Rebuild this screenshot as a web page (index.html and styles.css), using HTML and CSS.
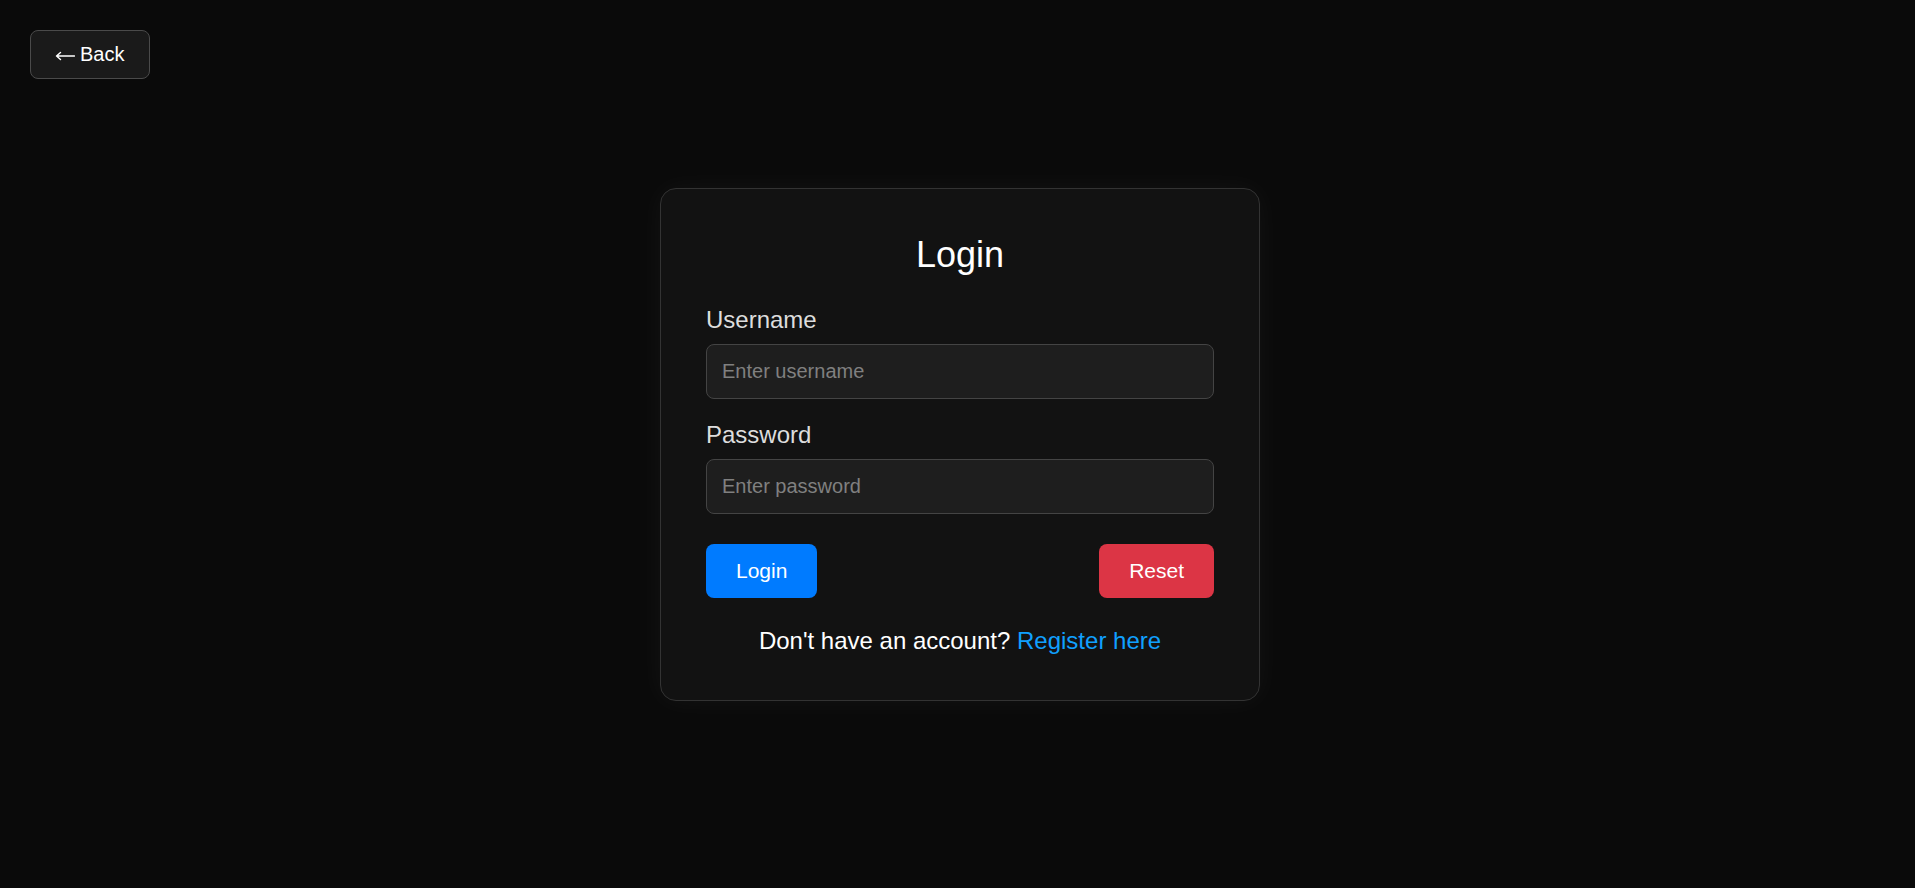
FILE: index.html
```html
<!DOCTYPE html>
<html lang="en">
<head>
<meta charset="utf-8">
<title>Login</title>
<link rel="stylesheet" href="styles.css">
</head>
<body>
<button class="back-btn" type="button"><svg class="back-arrow" width="20" height="10" viewBox="0 0 20 10" aria-hidden="true"><path d="M1.5 5H19.5M1.5 5L5.5 1.5M1.5 5L5.5 8.5" fill="none" stroke="#ffffff" stroke-width="1.4" stroke-linecap="round" stroke-linejoin="round"/></svg><span>Back</span></button>
<main class="page">
  <div class="card">
    <h2 class="title">Login</h2>
    <div class="form-group">
      <label class="label" for="username">Username</label>
      <input class="input" id="username" type="text" placeholder="Enter username">
    </div>
    <div class="form-group">
      <label class="label" for="password">Password</label>
      <input class="input" id="password" type="password" placeholder="Enter password">
    </div>
    <div class="actions">
      <button class="btn btn-primary" type="button">Login</button>
      <button class="btn btn-danger" type="button">Reset</button>
    </div>
    <p class="footer-text">Don't have an account? <a class="link" href="#">Register here</a></p>
  </div>
</main>
</body>
</html>
```

FILE: styles.css
```css
* {
  box-sizing: border-box;
}

html, body {
  margin: 0;
  padding: 0;
}

body {
  background: #0a0a0a;
  color: #ffffff;
  font-family: "Liberation Sans", Arial, sans-serif;
  min-height: 100vh;
}

.back-btn {
  position: absolute;
  top: 30px;
  left: 30px;
  display: inline-flex;
  align-items: center;
  gap: 5px;
  background: #1a1a1a;
  color: #ffffff;
  border: 1px solid #4a4a4a;
  border-radius: 8px;
  padding: 12px 25px 12px 24px;
  font-family: "Liberation Sans", Arial, sans-serif;
  font-size: 20px;
  line-height: 23px;
  cursor: pointer;
}

.back-arrow {
  display: block;
  margin-top: 3px;
}

.page {
  min-height: 100vh;
  display: flex;
  align-items: center;
  justify-content: center;
  padding-left: 5px;
}

.card {
  width: 600px;
  background: #121212;
  border: 1px solid #333333;
  border-radius: 16px;
  padding: 45px;
  box-shadow: 0 0 28px rgba(255, 255, 255, 0.045);
}

.title {
  margin: 0 0 30px;
  font-size: 36px;
  font-weight: 400;
  text-align: center;
  color: #ffffff;
}

.form-group {
  display: flex;
  flex-direction: column;
  gap: 10px;
  margin-bottom: 22px;
}

.label {
  font-size: 24px;
  color: #dddddd;
}

.input {
  width: 100%;
  background: #1e1e1e;
  border: 1px solid #444444;
  border-radius: 8px;
  padding: 15px;
  font-family: "Liberation Sans", Arial, sans-serif;
  font-size: 20px;
  line-height: 23px;
  color: #ffffff;
  outline: none;
}

.input::placeholder {
  color: #808080;
}

.actions {
  display: flex;
  justify-content: space-between;
  margin-top: 30px;
}

.btn {
  border: none;
  border-radius: 8px;
  padding: 15px 30px;
  font-family: "Liberation Sans", Arial, sans-serif;
  font-size: 21px;
  line-height: 24px;
  color: #ffffff;
  cursor: pointer;
}

.btn-primary {
  background: #007bff;
}

.btn-danger {
  background: #dc3545;
}

.footer-text {
  margin: 29px 0 0;
  font-size: 24px;
  text-align: center;
  color: #ffffff;
}

.link {
  color: #10a0ff;
  text-decoration: none;
}
```
